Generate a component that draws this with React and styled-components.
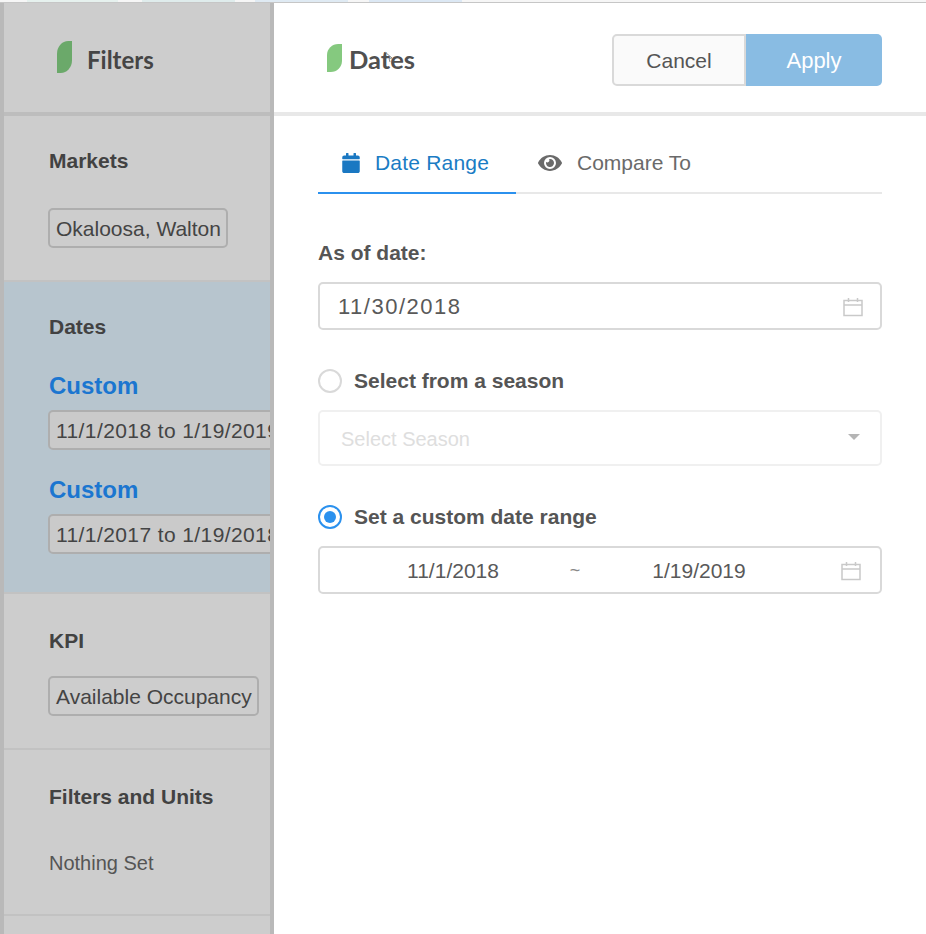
import React from 'react';
import styled, { createGlobalStyle } from 'styled-components';
import { FaCalendar, FaEye } from 'react-icons/fa';

const GlobalStyle = createGlobalStyle`
  html, body {
    margin: 0;
    padding: 0;
    background: #fff;
  }
  * {
    box-sizing: border-box;
  }
`;

const Page = styled.div`
  width: 926px;
  height: 934px;
  overflow: hidden;
  display: flex;
  flex-direction: column;
  font-family: "Liberation Sans", Arial, sans-serif;
`;

const TopStrip = styled.div`
  height: 3px;
  flex: none;
  display: flex;
  align-items: flex-start;
  border-bottom: 1px solid #c6c6c6;
  background: #f6f6f6;
`;

const Tint = styled.span`
  height: 2px;
  width: ${(props) => props.$width}px;
  margin-left: ${(props) => props.$gap}px;
  background: ${(props) => props.$color};
`;

const Body = styled.div`
  flex: 1;
  display: flex;
  min-height: 0;
`;

const Sidebar = styled.aside`
  width: 274px;
  flex: none;
  background: #cdcdcd;
  border-left: 4px solid #b9b9b9;
  border-right: 4px solid #b9b9b9;
  display: flex;
  flex-direction: column;
`;

const SideHeader = styled.div`
  height: 113px;
  flex: none;
  display: flex;
  align-items: center;
  gap: 15px;
  padding: 0 0 1px 53px;
  border-bottom: 4px solid #bdbdbd;
`;

const Leaf = styled.span`
  display: block;
  flex: none;
  width: ${(props) => props.$w}px;
  height: ${(props) => props.$h}px;
  background: ${(props) => props.$color};
  border-radius: 75% 0 75% 0 / 40% 0 40% 0;
`;

const SideTitle = styled.h1`
  margin: 4px 0 0;
  font-family: Lato, sans-serif;
  font-weight: 700;
  font-size: 24px;
  color: #454545;
`;

const Section = styled.section`
  height: ${(props) => props.$height}px;
  flex: none;
  overflow: hidden;
  padding: ${(props) => props.$top}px 0 0 44px;
  background: ${(props) => (props.$active ? '#b7c5ce' : 'transparent')};
  border-bottom: 2px solid #c2c2c2;
`;

const SectionTitle = styled.h2`
  margin: 0 0 ${(props) => props.$gap}px 1px;
  font-size: 21px;
  line-height: 24px;
  font-weight: 700;
  color: #424242;
`;

const Tag = styled.div`
  display: inline-block;
  height: 40px;
  line-height: 37px;
  padding: 0 5px 0 6px;
  border: 2px solid #aeaeae;
  border-radius: 5px;
  font-size: 21px;
  letter-spacing: ${(props) => (props.$active ? '0.4px' : '0')};
  white-space: nowrap;
  color: #444;
  background: ${(props) => (props.$active ? '#cacaca' : 'transparent')};
`;

const CustomLabel = styled.div`
  font-size: 24px;
  line-height: 28px;
  font-weight: 700;
  color: #1b76d0;
  margin: ${(props) => props.$top}px 0 10px 1px;
`;

const PlainText = styled.div`
  margin-left: 1px;
  font-size: 20px;
  line-height: 24px;
  color: #555;
`;

const Main = styled.main`
  flex: 1;
  min-width: 0;
  display: flex;
  flex-direction: column;
`;

const MainHeader = styled.header`
  position: relative;
  height: 113px;
  flex: none;
  display: flex;
  align-items: center;
  padding: 0 44px 0 53px;
  border-bottom: 4px solid #e8e8e8;
`;

const MainTitle = styled.h1`
  margin: 2px 0 0 7px;
  font-family: Lato, sans-serif;
  font-weight: 700;
  font-size: 25.5px;
  color: #505050;
`;

const Pointer = styled.svg`
  position: absolute;
  left: 110px;
  top: 48px;
`;

const ButtonGroup = styled.div`
  margin: 4px 0 0 auto;
  display: flex;
  height: 52px;
`;

const CancelButton = styled.button`
  width: 134px;
  border: 2px solid #d9d9d9;
  border-radius: 5px 0 0 5px;
  padding: 2px 0 0;
  background: #fafafa;
  color: #555;
  font: 21px "Liberation Sans", Arial, sans-serif;
`;

const ApplyButton = styled.button`
  width: 136px;
  border: 0;
  border-radius: 0 5px 5px 0;
  padding: 2px 0 0;
  background: #89bce3;
  color: #fff;
  font: 22px "Liberation Sans", Arial, sans-serif;
`;

const Content = styled.div`
  padding: 0 44px;
`;

const Tabs = styled.div`
  height: 78px;
  display: flex;
  border-bottom: 2px solid #e8e8e8;
`;

const Tab = styled.div`
  width: ${(props) => props.$width}px;
  height: 78px;
  display: flex;
  align-items: center;
  gap: ${(props) => props.$gap}px;
  padding: 17px 0 0 ${(props) => props.$left}px;
  font-size: 21px;
  letter-spacing: ${(props) => (props.$active ? '0.2px' : '0')};
  color: ${(props) => (props.$active ? '#1a7cc4' : '#6a6a6a')};
  border-bottom: 2px solid ${(props) => (props.$active ? '#2b91ee' : 'transparent')};
`;

const FieldLabel = styled.div`
  font-size: 21px;
  line-height: 24px;
  font-weight: 700;
  color: #555;
  margin: ${(props) => props.$top || 0}px 0 ${(props) => props.$bottom || 0}px;
`;

const RadioRow = styled.div`
  display: flex;
  align-items: center;
  gap: 12px;
  margin: ${(props) => props.$top}px 0 ${(props) => props.$bottom}px;
`;

const Radio = styled.span`
  width: 24px;
  height: 24px;
  flex: none;
  border-radius: 50%;
  border: 2px solid ${(props) => (props.$checked ? '#2b91ee' : '#d9d9d9')};
  display: flex;
  align-items: center;
  justify-content: center;

  &::after {
    content: '';
    display: ${(props) => (props.$checked ? 'block' : 'none')};
    width: 12px;
    height: 12px;
    border-radius: 50%;
    background: #2b91ee;
  }
`;

const Field = styled.div`
  height: ${(props) => props.$height || 48}px;
  display: flex;
  align-items: center;
  border: 2px solid ${(props) => (props.$disabled ? '#f0f0f0' : '#d9d9d9')};
  border-radius: 5px;
  padding: 2px ${(props) => props.$right || 17}px 0 ${(props) => props.$left || 18}px;
`;

const DateText = styled.span`
  flex: 1;
  font-size: 22px;
  letter-spacing: 1.5px;
  color: #595959;
`;

const PlaceholderText = styled.span`
  flex: 1;
  font-size: 20px;
  color: #dedede;
`;

const Caret = styled.span`
  width: 0;
  height: 0;
  margin-top: -4px;
  border-left: 6px solid transparent;
  border-right: 6px solid transparent;
  border-top: 6px solid #b5b5b5;
`;

const RangeDate = styled.span`
  width: ${(props) => props.$width}px;
  flex: none;
  text-align: center;
  font-size: 21px;
  color: #595959;
  margin-left: ${(props) => props.$left || 0}px;
`;

const RangeTilde = styled.span`
  width: 28px;
  flex: none;
  margin: -2px 0 0 38px;
  text-align: center;
  font-size: 18px;
  color: #888;
`;

const IconSlot = styled.span`
  margin-left: auto;
  display: flex;
`;

const CalendarOutline = () => (
  <svg width="20" height="20" viewBox="0 0 20 20" fill="none" stroke="#c9c9c9" strokeWidth="1.5">
    <path d="M1 3.5h18v15H1zM1 8h18M5.5 1v4M14.5 1v4" />
  </svg>
);

const App = () => {
  return (
    <Page>
      <GlobalStyle />
      <TopStrip>
        <Tint $gap={27} $width={91} $color="#e6f1ee" />
        <Tint $gap={24} $width={93} $color="#dfecec" />
        <Tint $gap={20} $width={93} $color="#dfeaf3" />
        <Tint $gap={21} $width={93} $color="#dce8f4" />
      </TopStrip>
      <Body>
        <Sidebar>
          <SideHeader>
            <Leaf $w={15} $h={32} $color="#6ba96a" />
            <SideTitle>Filters</SideTitle>
          </SideHeader>
          <Section $height={166} $top={33}>
            <SectionTitle $gap={35}>Markets</SectionTitle>
            <Tag>Okaloosa, Walton</Tag>
          </Section>
          <Section $height={312} $top={33} $active>
            <SectionTitle $gap={0}>Dates</SectionTitle>
            <CustomLabel $top={33}>Custom</CustomLabel>
            <Tag $active>11/1/2018 to 1/19/2019</Tag>
            <CustomLabel $top={26}>Custom</CustomLabel>
            <Tag $active>11/1/2017 to 1/19/2018</Tag>
          </Section>
          <Section $height={156} $top={35}>
            <SectionTitle $gap={23}>KPI</SectionTitle>
            <Tag>Available Occupancy</Tag>
          </Section>
          <Section $height={166} $top={35}>
            <SectionTitle $gap={42}>Filters and Units</SectionTitle>
            <PlainText>Nothing Set</PlainText>
          </Section>
        </Sidebar>
        <Main>
          <MainHeader>
            <Leaf $w={15} $h={28} $color="#85c97f" />
            <MainTitle>Dates</MainTitle>
            <Pointer width="10" height="12" viewBox="0 0 10 12">
              <path d="M1 1l7 6-3 .5L6 11" fill="none" stroke="#8a8a8a" strokeWidth="1" />
            </Pointer>
            <ButtonGroup>
              <CancelButton>Cancel</CancelButton>
              <ApplyButton>Apply</ApplyButton>
            </ButtonGroup>
          </MainHeader>
          <Content>
            <Tabs>
              <Tab $active $width={198} $left={23} $gap={14}>
                <FaCalendar size={20} color="#1a78c2" />
                Date Range
              </Tab>
              <Tab $width={250} $left={22} $gap={15}>
                <FaEye size={24} color="#6a6a6a" />
                Compare To
              </Tab>
            </Tabs>
            <FieldLabel $top={47} $bottom={17}>As of date:</FieldLabel>
            <Field>
              <DateText>11/30/2018</DateText>
              <CalendarOutline />
            </Field>
            <RadioRow $top={39} $bottom={17}>
              <Radio />
              <FieldLabel>Select from a season</FieldLabel>
            </RadioRow>
            <Field $disabled $height={56} $left={21} $right={20}>
              <PlaceholderText>Select Season</PlaceholderText>
              <Caret />
            </Field>
            <RadioRow $top={39} $bottom={17}>
              <Radio $checked />
              <FieldLabel>Set a custom date range</FieldLabel>
            </RadioRow>
            <Field $left={63} $right={19}>
              <RangeDate $width={140}>11/1/2018</RangeDate>
              <RangeTilde>~</RangeTilde>
              <RangeDate $width={140} $left={40}>1/19/2019</RangeDate>
              <IconSlot><CalendarOutline /></IconSlot>
            </Field>
          </Content>
        </Main>
      </Body>
    </Page>
  );
};

export default App;
